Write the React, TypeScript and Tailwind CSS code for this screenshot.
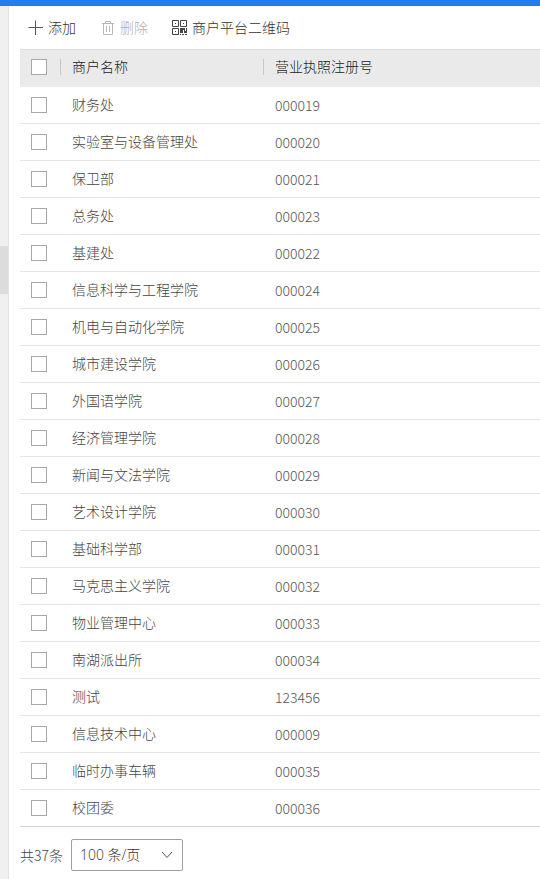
import type { ReactNode } from 'react';

const merchants = [
  { name: '财务处', code: '000019' },
  { name: '实验室与设备管理处', code: '000020' },
  { name: '保卫部', code: '000021' },
  { name: '总务处', code: '000023' },
  { name: '基建处', code: '000022' },
  { name: '信息科学与工程学院', code: '000024' },
  { name: '机电与自动化学院', code: '000025' },
  { name: '城市建设学院', code: '000026' },
  { name: '外国语学院', code: '000027' },
  { name: '经济管理学院', code: '000028' },
  { name: '新闻与文法学院', code: '000029' },
  { name: '艺术设计学院', code: '000030' },
  { name: '基础科学部', code: '000031' },
  { name: '马克思主义学院', code: '000032' },
  { name: '物业管理中心', code: '000033' },
  { name: '南湖派出所', code: '000034' },
  { name: '测试', code: '123456' },
  { name: '信息技术中心', code: '000009' },
  { name: '临时办事车辆', code: '000035' },
  { name: '校团委', code: '000036' },
];

function PlusIcon() {
  return (
    <svg width="16" height="16" viewBox="0 0 16 16" fill="none" stroke="#555" aria-hidden="true">
      <path d="M0.5 7.5H15M7.5 0.5V15" />
    </svg>
  );
}

function TrashIcon() {
  return (
    <svg width="16" height="16" viewBox="0 0 16 16" fill="none" stroke="#b8b8b8" aria-hidden="true">
      <path d="M2 3.5H14M5.5 3.5V1.5H10.5V3.5M3.5 3.5V14.5H12.5V3.5M6.5 6V12M9.5 6V12" />
    </svg>
  );
}

function QrIcon() {
  return (
    <svg width="16" height="16" viewBox="0 0 16 16" fill="none" stroke="#444" aria-hidden="true">
      <path d="M0.5 0.5H6.5V6.5H0.5ZM8.5 0.5H14.5V6.5H8.5ZM0.5 8.5H6.5V14.5H0.5Z" />
      <path
        d="M3 3H4V4H3ZM11 3H12V4H11ZM3 11H4V12H3ZM8 8H11V13H8ZM11 8H12V10H11ZM12 8H13V11H12ZM14 8H15V13H14ZM12 11H14V13H12ZM8 14H9V15H8ZM10 14H12V15H10ZM13 14H15V15H13Z"
        fill="#444"
        stroke="none"
      />
    </svg>
  );
}

function ToolButton({ icon, children, disabled }: { icon: ReactNode; children: ReactNode; disabled?: boolean }) {
  return (
    <button type="button" disabled={disabled} className="flex items-center gap-1 text-[#333] disabled:text-[#b0b0b0]">
      {icon}
      {children}
    </button>
  );
}

function Checkbox({ label }: { label: string }) {
  return (
    <input
      type="checkbox"
      aria-label={label}
      className="block size-4 appearance-none border border-[#a8a8a8] bg-white checked:bg-[#217ef2]"
    />
  );
}

export default function App() {
  return (
    <div className="flex min-h-screen flex-col bg-white font-['Open_Sans','Noto_Sans_CJK_SC',sans-serif] text-sm leading-5 font-light text-[#444]">
      <header className="h-1.5 bg-[#217ef2]" />
      <div className="flex flex-1">
        <aside className="w-[9px] shrink-0 border-r border-[#e2e2e2] bg-[#f0f0f0] pt-60">
          <div className="h-12 bg-[#dcdcdc]" />
        </aside>
        <main className="min-w-0 flex-1 pl-[11px]">
          <div className="flex h-[43px] items-center gap-6 pl-2">
            <ToolButton icon={<PlusIcon />}>添加</ToolButton>
            <ToolButton icon={<TrashIcon />} disabled>
              删除
            </ToolButton>
            <ToolButton icon={<QrIcon />}>商户平台二维码</ToolButton>
          </div>
          <table className="w-full table-fixed border-separate border-spacing-0 text-left">
            <thead className="bg-[#eaeaea] text-[#222]">
              <tr className="h-[38px]">
                <th className="w-10 border-t border-[#dedede] p-0 pb-1 pl-[11px]">
                  <Checkbox label="全选" />
                </th>
                <th className="w-[203px] border-t border-[#dedede] p-0 pb-1 font-light">
                  <div className="flex h-4 items-center border-l border-[#c8c8c8] pl-[11px]">商户名称</div>
                </th>
                <th className="border-t border-[#dedede] p-0 pb-1 font-light">
                  <div className="flex h-4 items-center border-l border-[#c8c8c8] pl-[11px]">营业执照注册号</div>
                </th>
              </tr>
            </thead>
            <tbody>
              {merchants.map((m) => (
                <tr key={m.code} className="group h-[37px]">
                  <td className="border-b border-[#e6e6e6] p-0 pl-[11px] group-last:border-[#d4d4d4]">
                    <Checkbox label={m.name} />
                  </td>
                  <td className="border-b border-[#e6e6e6] p-0 pl-3 group-last:border-[#d4d4d4]">{m.name}</td>
                  <td className="border-b border-[#e6e6e6] p-0 pl-3 font-['Noto_Sans_CJK_SC',sans-serif] text-[#555] group-last:border-[#d4d4d4]">
                    {m.code}
                  </td>
                </tr>
              ))}
            </tbody>
          </table>
          <footer className="flex items-center gap-2 pt-3">
            <label htmlFor="page-size" className="font-['Noto_Sans_CJK_SC',sans-serif]">
              共37条
            </label>
            <div className="grid w-28 items-center">
              <select
                id="page-size"
                defaultValue="100"
                className="col-start-1 row-start-1 h-8 appearance-none rounded-xs border border-[#a0a0a0] bg-white pl-2 text-[#333]"
              >
                <option value="20">20 条/页</option>
                <option value="50">50 条/页</option>
                <option value="100">100 条/页</option>
              </select>
              <svg
                width="12"
                height="8"
                viewBox="0 0 12 8"
                fill="none"
                stroke="#555"
                aria-hidden="true"
                className="pointer-events-none col-start-1 row-start-1 mr-2.5 justify-self-end"
              >
                <path d="M1 1L6 6.5L11 1" />
              </svg>
            </div>
          </footer>
        </main>
      </div>
    </div>
  );
}
